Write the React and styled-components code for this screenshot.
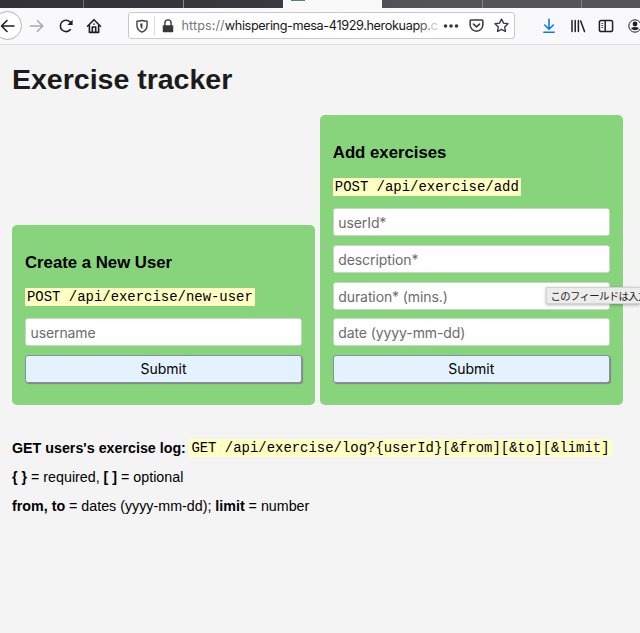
import React from "react";
import styled, { createGlobalStyle } from "styled-components";

const GlobalStyle = createGlobalStyle`
  * { box-sizing: border-box; }
  html, body { margin: 0; background: #f4f4f4; overflow: hidden; }
  body { font-family: "Liberation Sans", Arial, sans-serif; color: #000; }
`;

const Window = styled.div`
  width: 640px;
  height: 633px;
  overflow: hidden;
  background: #f4f4f4;
`;

const TabStrip = styled.div`
  display: flex;
  height: 8px;
  background: linear-gradient(90deg, #333337, #38383c 40%, #535357 62%, #56565a);
`;

const Tab = styled.div`
  flex: 0 0 ${(p) => p.$width}px;
  height: 8px;
  padding-left: 8px;
  border-right: 1px solid ${(p) => (p.$edge ? p.$edge : "transparent")};
  background: ${(p) => (p.$active ? "#f9f9fb" : "transparent")};
`;

const Favicon = styled.div`
  width: 14px;
  height: 1px;
  background: #5d8562;
`;

const Toolbar = styled.div`
  display: flex;
  align-items: center;
  width: 654px;
  height: 37px;
  margin-left: -7px;
  padding-bottom: 1px;
  background: #f9f9fb;
  border-bottom: 1px solid #dcdcde;
`;

const ToolButton = styled.button`
  display: flex;
  align-items: center;
  justify-content: center;
  flex: 0 0 ${(p) => p.$width || 29}px;
  height: 29px;
  padding: 0;
  border: ${(p) => (p.$round ? "1px solid #b5b5b8" : "0")};
  border-radius: 50%;
  background: ${(p) => (p.$round ? "#fff" : "transparent")};
  color: ${(p) => p.$color || "#202024"};
`;

const AddressBar = styled.div`
  display: flex;
  align-items: center;
  flex: 0 0 387px;
  min-width: 0;
  height: 27px;
  margin: 0 20px;
  border: 1px solid #c9c9cc;
  border-radius: 3px;
  background: #fff;
  color: #38383c;
`;

const AddressIcon = styled.span`
  display: flex;
  justify-content: center;
  flex: 0 0 ${(p) => p.$width}px;
`;

const Divider = styled.span`
  width: 1px;
  height: 19px;
  background: #dadadc;
`;

const Url = styled.span`
  flex: 0 0 256px;
  min-width: 0;
  padding-left: 0.5px;
  white-space: nowrap;
  font: 12.7px/20px Inter, sans-serif;
  letter-spacing: 0.06px;
  color: #77777b;
`;

const Host = styled.span`
  letter-spacing: -0.38px;
  color: #18181c;
`;

const Fade = styled.span`
  letter-spacing: -0.38px;
  color: ${(p) => p.$color};
`;

const Svg = styled.svg`
  display: block;
  overflow: visible;
  fill: none;
  stroke: currentColor;
  stroke-width: ${(p) => p.$weight || 1.6};
  stroke-linecap: round;
  stroke-linejoin: round;
`;

const Icon = ({ children, size = 16, weight }) => (
  <Svg width={size} height={size} viewBox="0 0 16 16" $weight={weight}>
    {children}
  </Svg>
);

const Page = styled.main`
  padding: 0 12px;
`;

const Title = styled.h1`
  margin: 16px 0 0;
  height: 36px;
  font-size: 28.5px;
  line-height: 36px;
  color: #1b1b1b;
`;

const Forms = styled.div`
  display: flex;
  align-items: flex-end;
  gap: 4.5px;
  margin-top: 18.4px;
`;

const Card = styled.form`
  display: flex;
  flex-direction: column;
  align-items: flex-start;
  flex: 0 0 303.3px;
  padding: 26.4px 13px 21.7px;
  border-radius: 5px;
  background: #88d47d;
`;

const Heading = styled.h3`
  margin: 0 0 14.2px;
  font-size: 16.75px;
  line-height: 22px;
`;

const Code = styled.code`
  display: inline-block;
  height: 18px;
  padding: 0 2px;
  font: 13.95px/19px "Liberation Mono", "Courier New", monospace;
  white-space: nowrap;
  background: #ffffc4;
`;

const Field = styled.input`
  width: 277px;
  height: 28px;
  margin: 0 0 8.7px;
  padding: 1px 4.5px 0;
  border: 1px solid #c5d9c2;
  border-radius: 3px;
  background: #fff;
  font: 14px Inter, sans-serif;
  letter-spacing: -0.1px;
  &::placeholder { color: #6b6b6b; opacity: 1; }
`;

const Fields = styled.div`
  display: flex;
  flex-direction: column;
  margin-top: 12.2px;
`;

const Submit = styled.button`
  width: 277px;
  height: 28px;
  padding: 0;
  border: 1px solid #84909a;
  border-radius: 3px;
  background: #e4f1ff;
  box-shadow: 1px 1px 1px 0 #85818b;
  font: 14px Inter, sans-serif;
  color: #000;
`;

const Notes = styled.section`
  margin-top: 33.4px;
  font-size: 14.27px;
`;

const Note = styled.p`
  display: flex;
  align-items: center;
  gap: ${(p) => p.$gap || 0}px;
  height: 20px;
  margin: 0 0 8.9px;
  line-height: 20px;
  white-space: pre;
`;

const Tooltip = styled.div`
  position: absolute;
  left: 546px;
  top: 287px;
  width: 94px;
  height: 17px;
  padding-left: 3.5px;
  overflow: hidden;
  border: 1px solid #d2d2d2;
  border-right: 0;
  background: #ececec;
  box-shadow: 0 1px 3px rgba(0, 0, 0, 0.3);
  font: 10.4px/15px "Noto Sans CJK JP", sans-serif;
  letter-spacing: -0.65px;
  white-space: nowrap;
  color: #222;
`;

const fieldNames = ["userId*", "description*", "duration* (mins.)", "date (yyyy-mm-dd)"];

function BrowserBar() {
  return (
    <header>
      <TabStrip>
        <Tab $width={84} $edge="#707074" />
        <Tab $width={100} $edge="#88888b" />
        <Tab $width={99} />
        <Tab $width={99} $active><Favicon /></Tab>
        <Tab $width={101} $edge="#818184" />
        <Tab $width={99} $edge="#818184" />
      </TabStrip>
      <Toolbar>
        <ToolButton $round aria-label="Back">
          <Icon><path d="M14 8H1.5M7 2.5L1.5 8L7 13.5" /></Icon>
        </ToolButton>
        <ToolButton $color="#aaaaad" aria-label="Forward">
          <Icon><path d="M1.5 8h12M8.5 2.7L13.8 8l-5.3 5.3" /></Icon>
        </ToolButton>
        <ToolButton aria-label="Reload">
          <Icon>
            <path d="M12.4 11.6A5.7 5.7 0 1 1 12.4 4.2" />
            <path d="M14.6 1.7v5.2H9.4z" fill="currentColor" stroke="none" />
          </Icon>
        </ToolButton>
        <ToolButton $width={28} aria-label="Home">
          <Icon>
            <path d="M1.5 8.2L8 1.7L14.5 8.2M3.4 7.2v7.2h9.2V7.2" />
            <path d="M6.3 14V9h3.4v5M8 6v.3" />
          </Icon>
        </ToolButton>
        <AddressBar>
          <AddressIcon $width={25}>
            <Icon size={14} weight={1.5}>
              <path d="M8 1.5C6 2.5 4 2.5 2.2 2.5v4.7c0 4 2 6.4 5.8 7.8c3.8-1.4 5.8-3.8 5.8-7.8V2.5C12 2.5 10 2.5 8 1.5z" />
              <path d="M8.4 4.8v6.6C6.8 10.5 6 9 6 5.4z" fill="currentColor" stroke="none" />
            </Icon>
          </AddressIcon>
          <Divider />
          <AddressIcon $width={26}>
            <Icon size={14}>
              <path d="M4.5 8V4.5a3.5 3.5 0 0 1 7 0V8" />
              <rect x="2" y="7" width="12" height="8" rx="1" fill="currentColor" stroke="none" />
            </Icon>
          </AddressIcon>
          <Url>
            https://<Host>whispering-mesa-41929.herokuap</Host>
            <Fade $color="#626266">p</Fade><Fade $color="#929295">.</Fade><Fade $color="#c4c4c6">c</Fade>
          </Url>
          <AddressIcon $width={27}>
            <Icon>
              <g fill="currentColor" stroke="none">
                <circle cx="2.5" cy="8" r="1.8" /><circle cx="8" cy="8" r="1.8" /><circle cx="13.5" cy="8" r="1.8" />
              </g>
            </Icon>
          </AddressIcon>
          <AddressIcon $width={24}>
            <Icon size={15}>
              <path d="M2.2 2.2h11.6q1 0 1 1v4a6.8 6.8 0 0 1-13.6 0v-4q0-1 1-1zM4.8 6.5L8 9.5l3.2-3" />
            </Icon>
          </AddressIcon>
          <AddressIcon $width={26}>
            <Icon size={15} weight={1.5}>
              <path d="M8 1.1l2.1 4.4 4.8.7-3.5 3.4.8 4.8L8 12.2l-4.2 2.2.8-4.8L1.1 6.2l4.8-.7z" />
            </Icon>
          </AddressIcon>
        </AddressBar>
        <ToolButton $width={28.5} $color="#0879ef" aria-label="Downloads">
          <Icon><path d="M8 1.3v9.5M3.7 7L8 11.2L12.3 7M2.9 14.3h10.2" /></Icon>
        </ToolButton>
        <ToolButton $width={28.5} aria-label="Library">
          <Icon weight={1.5}><path d="M2 2.5v11M5.2 2.5v11M8.4 2.5v11M10.7 3l3.8 10.5" /></Icon>
        </ToolButton>
        <ToolButton $width={28.5} aria-label="Sidebar">
          <Icon weight={1.5}>
            <rect x="1.4" y="2.4" width="13.2" height="11.2" rx="1.8" />
            <path d="M7.2 3v10" /><path d="M3.8 5.5h1M3.8 7.5h1M3.8 9.5h1" strokeWidth="0.8" />
          </Icon>
        </ToolButton>
        <ToolButton $width={28.5} aria-label="Account">
          <Icon weight={1}>
            <circle cx="8" cy="8" r="6.2" />
            <circle cx="8" cy="6" r="2.4" fill="currentColor" stroke="none" />
            <path d="M3.9 10.2q4.1-2.2 8.2 0Q8 14.2 3.9 10.2z" fill="currentColor" stroke="none" />
          </Icon>
        </ToolButton>
      </Toolbar>
    </header>
  );
}

export default function App() {
  return (
    <Window>
      <GlobalStyle />
      <BrowserBar />
      <Page>
        <Title>Exercise tracker</Title>
        <Forms>
          <Card>
            <Heading>Create a New User</Heading>
            <Code>POST /api/exercise/new-user</Code>
            <Fields>
              <Field placeholder="username" />
              <Submit type="button">Submit</Submit>
            </Fields>
          </Card>
          <Card>
            <Heading>Add exercises</Heading>
            <Code>POST /api/exercise/add</Code>
            <Fields>
              {fieldNames.map((name) => <Field key={name} placeholder={name} />)}
              <Submit type="button">Submit</Submit>
            </Fields>
          </Card>
        </Forms>
        <Notes>
          <Note $gap={3.5}>
            <strong>GET users's exercise log:</strong>
            <Code>{"GET /api/exercise/log?{userId}[&from][&to][&limit]"}</Code>
          </Note>
          <Note><strong>{"{ }"}</strong> = required, <strong>[ ]</strong> = optional</Note>
          <Note><strong>from, to</strong> = dates (yyyy-mm-dd); <strong>limit</strong> = number</Note>
        </Notes>
      </Page>
      <Tooltip>このフィールドは入力</Tooltip>
    </Window>
  );
}
